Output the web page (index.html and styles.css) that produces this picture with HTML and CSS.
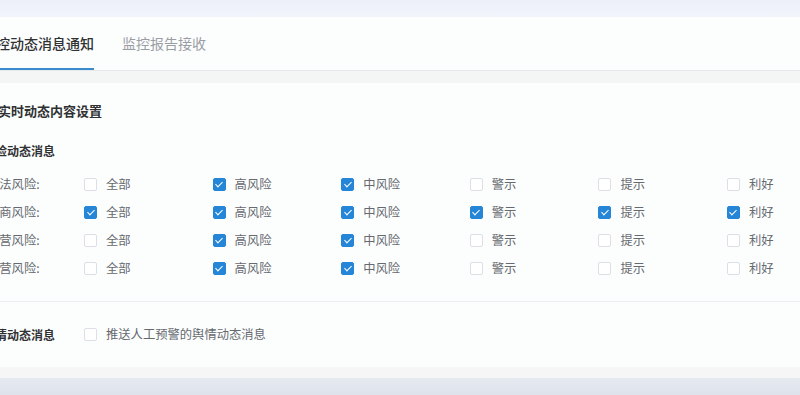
FILE: index.html
```html
<!DOCTYPE html>
<html lang="zh-CN">
<head>
    <meta charset="UTF-8">
    <meta name="viewport" content="width=device-width, initial-scale=1.0">
    <title>监控动态消息通知</title>
    <link rel="stylesheet" href="styles.css">
</head>
<body>
    <div class="top-band"></div>
    <div class="card">
        <div class="tabs">
            <div class="tab active">监控动态消息通知</div>
            <div class="tab">监控报告接收</div>
        </div>
        <div class="strip"></div>

        <div class="content">
            <h2 class="title">实时动态内容设置</h2>

            <h3 class="subtitle">风险动态消息</h3>
            <div class="grid">
                <div class="label">司法风险:</div>
                <label class="check"><span class="box"></span>全部</label>
                <label class="check"><span class="box on"></span>高风险</label>
                <label class="check"><span class="box on"></span>中风险</label>
                <label class="check"><span class="box"></span>警示</label>
                <label class="check"><span class="box"></span>提示</label>
                <label class="check"><span class="box"></span>利好</label>

                <div class="label">工商风险:</div>
                <label class="check"><span class="box on"></span>全部</label>
                <label class="check"><span class="box on"></span>高风险</label>
                <label class="check"><span class="box on"></span>中风险</label>
                <label class="check"><span class="box on"></span>警示</label>
                <label class="check"><span class="box on"></span>提示</label>
                <label class="check"><span class="box on"></span>利好</label>

                <div class="label">经营风险:</div>
                <label class="check"><span class="box"></span>全部</label>
                <label class="check"><span class="box on"></span>高风险</label>
                <label class="check"><span class="box on"></span>中风险</label>
                <label class="check"><span class="box"></span>警示</label>
                <label class="check"><span class="box"></span>提示</label>
                <label class="check"><span class="box"></span>利好</label>

                <div class="label">运营风险:</div>
                <label class="check"><span class="box"></span>全部</label>
                <label class="check"><span class="box on"></span>高风险</label>
                <label class="check"><span class="box on"></span>中风险</label>
                <label class="check"><span class="box"></span>警示</label>
                <label class="check"><span class="box"></span>提示</label>
                <label class="check"><span class="box"></span>利好</label>
            </div>

            <div class="divider"></div>

            <div class="grid">
                <div class="label strong">舆情动态消息</div>
                <label class="check wide"><span class="box"></span>推送人工预警的舆情动态消息</label>
            </div>
        </div>
        <div class="strip bottom"></div>
    </div>
    <div class="shade"></div>
</body>
</html>
```

FILE: styles.css
```css
body {
    margin: 0;
    font-family: "Noto Sans CJK SC", "Noto Sans", sans-serif;
    background: #e3e7ef;
    overflow: hidden;
}
.top-band {
    height: 17px;
    background: linear-gradient(#edf0f9, #f1f4fb);
}
.card {
    margin-left: -20px;
    width: 900px;
    background: #fcfefe;
}
.tabs {
    display: flex;
    height: 53px;
    padding-left: 2px;
    border-bottom: 1px solid #e6e9ec;
}
.tab {
    position: relative;
    font-size: 14px;
    line-height: 53px;
    color: #9a9da3;
    margin-right: 28px;
}
.tab.active {
    color: #303133;
    font-weight: 500;
}
.tab.active::after {
    content: "";
    position: absolute;
    left: -4px;
    right: 0;
    bottom: 0;
    height: 2px;
    background: #3a8ccf;
}
.strip {
    height: 12px;
    background: #f4f5f5;
}
.strip.bottom {
    height: 11px;
    background: #f6f6f7;
}
.content {
    padding: 18px 0 19px 7px;
}
.title {
    margin: 0 0 20px 11px;
    font-size: 13px;
    line-height: 20px;
    font-weight: 700;
    color: #303133;
}
.subtitle {
    margin: 0 0 9px -4px;
    font-size: 12px;
    line-height: 20px;
    font-weight: 700;
    color: #303133;
}
.grid {
    display: grid;
    grid-template-columns: 97px repeat(6, 128.6px);
    grid-auto-rows: 28px;
    align-items: center;
}
.label {
    font-size: 12.3px;
    color: #66696e;
}
.label.strong {
    margin-left: -4px;
    font-size: 12px;
    font-weight: 700;
    color: #303133;
}
.check {
    display: flex;
    align-items: center;
    gap: 9px;
    font-size: 12.3px;
    color: #66696e;
}
.check.wide {
    grid-column: span 6;
}
.box {
    position: relative;
    width: 11px;
    height: 11px;
    border: 1px solid #dcdfe6;
    border-radius: 2px;
    background: #fff;
}
.box.on {
    background: #2585d6;
    border-color: #2585d6;
}
.box.on::after {
    content: "";
    position: absolute;
    left: 3.5px;
    top: 1px;
    width: 3px;
    height: 6px;
    border: solid #fff;
    border-width: 0 1.5px 1.5px 0;
    transform: rotate(45deg);
}
.divider {
    margin: 19px 0 18px;
    border-top: 1px solid #eceef1;
}
.shade {
    height: 20px;
    background: linear-gradient(#e6e9f0, #dde2eb);
}
```
